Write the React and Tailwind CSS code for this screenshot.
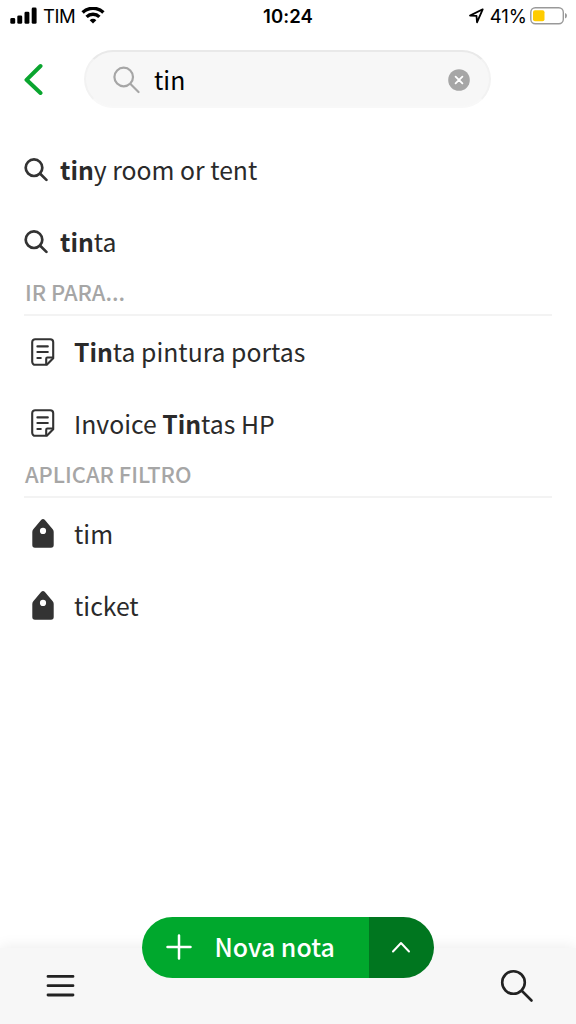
const suggestions = [
  [["tin", true], ["y room or tent", false]],
  [["tin", true], ["ta", false]],
];

const goTo = [
  [["Tin", true], ["ta pintura portas", false]],
  [["Invoice ", false], ["Tin", true], ["tas HP", false]],
];

const filters = [[["tim", false]], [["ticket", false]]];

function SignalIcon() {
  return (
    <svg width="28" height="18" viewBox="0 0 28 18" fill="#000">
      <rect x="0.3" y="11" width="4.9" height="5.8" rx="1.4" />
      <rect x="7.3" y="8.4" width="4.9" height="8.4" rx="1.4" />
      <rect x="14.5" y="4.7" width="4.9" height="12.1" rx="1.4" />
      <rect x="21.7" y="0.6" width="4.9" height="16.2" rx="1.4" />
    </svg>
  );
}

function WifiIcon() {
  return (
    <svg width="24" height="18" viewBox="0 0 24 18" fill="none" stroke="#000" strokeWidth="3.4">
      <path d="M1.6 5.500a15 15 0 0 1 20.800 0" />
      <path d="M5.600 9.900a9.200 9.200 0 0 1 12.800 0" />
      <path d="M12 16.500l-3.300-3.300a4.700 4.700 0 0 1 6.600 0z" fill="#000" stroke="none" />
    </svg>
  );
}

function SearchIcon() {
  return (
    <svg width="24" height="24" viewBox="0 0 24 24" fill="none" stroke="#333" strokeWidth="2.7" strokeLinecap="round">
      <circle cx="10" cy="9.7" r="8.3" />
      <path d="M16.2 15.8l6.2 6.1" />
    </svg>
  );
}

function NoteIcon() {
  return (
    <svg width="24" height="28" viewBox="0 0 24 28" fill="none" stroke="#333" strokeWidth="2.1" strokeLinecap="round" strokeLinejoin="round">
      <path d="M4.2 1.2h15a3 3 0 0 1 3 3v16l-6.400 6.600H4.200a3 3 0 0 1-3-3V4.200a3 3 0 0 1 3-3z" />
      <path d="M15.200 26.200v-5.500a1.200 1.200 0 0 1 1.200-1.200h5.400" />
      <path d="M6.400 8.400h10.400M6.400 14h10.400M6.400 20h3.400" />
    </svg>
  );
}

function TagIcon() {
  return (
    <svg width="24" height="29" viewBox="-1 0 24 29">
      <path
        fill="#333"
        fillRule="evenodd"
        d="M9.300.700q1.700-1.300 3.400 0l8 9.600q1 1.300 1 2.700v13q0 2.700-2.700 2.700H3Q.300 28.700.300 26V13q0-1.400 1-2.700zM11 8.800a3.100 3.100 0 1 0 0 6.200 3.100 3.100 0 0 0 0-6.200z"
      />
    </svg>
  );
}

function Row({ icon, parts, wide }) {
  return (
    <li className="flex h-[71.700px] items-center">
      <span className={wide ? "flex w-[50px] pl-[7px]" : "flex w-[36px]"}>{icon}</span>
      <span className="pb-px text-[24.750px] leading-[34px] whitespace-pre text-[#2a2a2a]">
        {parts.map(([text, bold]) =>
          bold ? (
            <b key={text} className="font-bold">
              {text}
            </b>
          ) : (
            <span key={text}>{text}</span>
          )
        )}
      </span>
    </li>
  );
}

function Heading({ children }) {
  return (
    <h2 className="h-[38.500px] border-b-2 border-[#f3f3f3] pl-px text-[21.900px] leading-[30px] font-medium whitespace-nowrap text-[#a6a6a6]">
      {children}
    </h2>
  );
}

export default function App() {
  return (
    <div className="flex h-[1024px] w-[576px] flex-col overflow-hidden bg-white font-['Noto_Sans_CJK_SC',sans-serif]">
      <div className="grid h-8 grid-cols-3 items-center font-['Inter',sans-serif] text-[18.500px] leading-8 text-black">
        <div className="flex items-center pl-[10px]">
          <SignalIcon />
          <span className="ml-[5px] w-[38px] tracking-[-0.4px]">TIM</span>
          <WifiIcon />
        </div>
        <div className="text-center font-semibold tracking-[0.1px]">10:24</div>
        <div className="flex items-center justify-end pr-2">
          <svg className="mr-[6px]" width="16" height="16" viewBox="0 0 16 16" fill="none" stroke="#000" strokeWidth="1.800" strokeLinejoin="round">
            <path d="M14.700 1.300L2 7.600l6.500.200.500 6.500z" />
          </svg>
          <span>41%</span>
          <svg className="ml-[3px]" width="38" height="18" viewBox="0 0 38 18" fill="none">
            <rect x="0.800" y="0.700" width="32.500" height="16" rx="4.500" stroke="#999" strokeWidth="1.400" />
            <rect x="3" y="3.200" width="11.500" height="11" rx="2" fill="#fc0" />
            <path d="M35 6q2 .700 2 2.700t-2 2.700z" fill="#999" />
          </svg>
        </div>
      </div>

      <header className="flex h-[94px] items-center pl-6">
        <svg width="19" height="32" viewBox="0 0 19 32" fill="none" stroke="#0aa52f" strokeWidth="4" strokeLinecap="round" strokeLinejoin="round">
          <path d="M16.500 3L2.500 16.800l14 13.200" />
        </svg>
        <div className="ml-[41px] flex h-[58px] w-[407px] items-center rounded-full border-2 border-t-[#e9e9e9] border-r-[#f2f2f2] border-b-[#f8f8f8] border-l-[#f2f2f2] bg-[#f7f7f7] pr-[19px] pl-[27px]">
          <svg className="mt-[2px]" width="27" height="28" viewBox="0 0 27 28" fill="none" stroke="#a6a6a6" strokeWidth="2.200" strokeLinecap="round">
            <circle cx="10.700" cy="11" r="9.300" />
            <path d="M17.500 18l8 8" />
          </svg>
          <span className="ml-[14px] flex-1 pt-px text-[24.750px] leading-[35px] text-black">tin</span>
          <svg className="mt-px" width="22" height="22" viewBox="0 0 22 22">
            <circle cx="11" cy="11" r="10.800" fill="#a6a6a6" />
            <path d="M7.600 7.600l6.800 6.800M14.400 7.600l-6.800 6.800" stroke="#fff" strokeWidth="1.800" strokeLinecap="round" />
          </svg>
        </div>
      </header>

      <main className="flex-1 px-6 pt-2">
        <ul>
          {suggestions.map((parts, i) => (
            <Row key={i} icon={<SearchIcon />} parts={parts} />
          ))}
        </ul>
        <Heading>IR PARA...</Heading>
        <ul>
          {goTo.map((parts, i) => (
            <Row key={i} icon={<NoteIcon />} parts={parts} wide />
          ))}
        </ul>
        <Heading>APLICAR FILTRO</Heading>
        <ul>
          {filters.map((parts, i) => (
            <Row key={i} icon={<TagIcon />} parts={parts} wide />
          ))}
        </ul>
      </main>

      <footer className="relative flex h-[76px] items-center justify-between bg-[#f7f7f7] pr-[42px] pl-[46px] shadow-[0_-1px_14px_rgba(0,0,0,0.080)]">
        <svg width="29" height="24" viewBox="0 0 29 24" stroke="#222" strokeWidth="2.800" strokeLinecap="round">
          <path d="M2 2.400h25M2 11.700h25M2 21h25" />
        </svg>
        <svg width="34" height="34" viewBox="0 0 34 34" fill="none" stroke="#222" strokeWidth="2.600" strokeLinecap="round">
          <circle cx="13.500" cy="13.500" r="11.300" />
          <path d="M22 22l9.500 9.500" />
        </svg>
        <button className="absolute top-[-31px] left-[142px] flex h-[61px] w-[292px] overflow-hidden rounded-full">
          <span className="flex h-full w-[227px] items-center bg-[#00a82d] pl-[24px] text-white">
            <svg className="mb-[2px]" width="26" height="26" viewBox="0 0 26 26" stroke="#fff" strokeWidth="2.500" strokeLinecap="round">
              <path d="M13 1.500v23M1.500 13h23" />
            </svg>
            <span className="ml-[22.500px] pb-[3px] text-[24.900px] leading-[34px] font-medium whitespace-nowrap">Nova nota</span>
          </span>
          <span className="flex h-full flex-1 items-center bg-[#00761f] pb-[2px] pl-[22px]">
            <svg width="20" height="12" viewBox="0 0 20 12" fill="none" stroke="#fff" strokeWidth="2" strokeLinecap="round" strokeLinejoin="round">
              <path d="M2 10.500l8-8.500 8 8.500" />
            </svg>
          </span>
        </button>
      </footer>
    </div>
  );
}
